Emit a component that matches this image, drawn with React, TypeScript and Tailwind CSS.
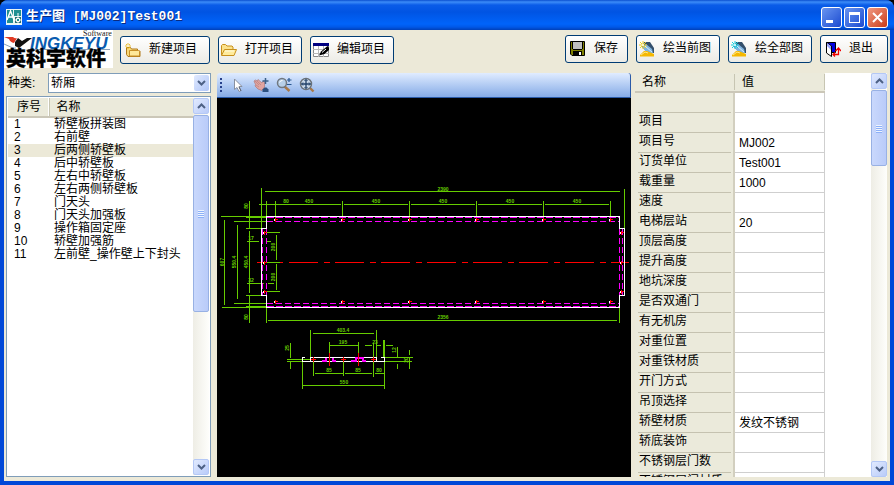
import type { ReactNode } from "react";
import clsx from "clsx";

const PARTS = [
  "轿壁板拼装图",
  "右前壁",
  "后两侧轿壁板",
  "后中轿壁板",
  "左右中轿壁板",
  "左右两侧轿壁板",
  "门天头",
  "门天头加强板",
  "操作箱固定座",
  "轿壁加强筋",
  "左前壁_操作壁上下封头",
];

const SELECTED_PART = 2;

const PROPERTIES = [
  { name: "", value: "" },
  { name: "项目", value: "" },
  { name: "项目号", value: "MJ002" },
  { name: "订货单位", value: "Test001" },
  { name: "载重量", value: "1000" },
  { name: "速度", value: "" },
  { name: "电梯层站", value: "20" },
  { name: "顶层高度", value: "" },
  { name: "提升高度", value: "" },
  { name: "地坑深度", value: "" },
  { name: "是否双通门", value: "" },
  { name: "有无机房", value: "" },
  { name: "对重位置", value: "" },
  { name: "对重铁材质", value: "" },
  { name: "开门方式", value: "" },
  { name: "吊顶选择", value: "" },
  { name: "轿壁材质", value: "发纹不锈钢" },
  { name: "轿底装饰", value: "" },
  { name: "不锈钢层门数", value: "" },
  { name: "不锈钢层门材质", value: "" },
];

// Hole positions along the long edges of the panel
const HOLES_X = [58.5, 125.5, 192.5, 259.5, 326.5, 393.5];
const HOLES_Y = [134.5, 164.5, 193.5];

/* ---------- icons ---------- */

const IconNew = () => (
  <svg viewBox="0 0 16 16" className="size-4 shrink-0">
    <path d="M1.5 5.5h4l1 1.5h6v2h2.5v5.5h-12l-1.5-2z" fill="#f8d878" stroke="#b07818" />
    <path d="M4.5 8.5h9l1 1v4.5h-10z" fill="#ffe99a" stroke="#c89028" />
    <path d="M3 1v6M0 4h6M1 2l4 4M5 2L1 6" stroke="#e8b820" strokeWidth=".9" />
    <path d="M3 3v2M2 4h2" stroke="#fff" />
  </svg>
);

const IconOpen = () => (
  <svg viewBox="0 0 16 16" className="size-4 shrink-0">
    <path d="M.5 13V3.5l1-1h3l1.500 1.500h5l1 1V7" fill="#fbe28c" stroke="#c8901c" />
    <path d="M.5 13.500L3.500 7.500h12l-2.500 6z" fill="#ffeb9c" stroke="#c8901c" />
    <path d="M4 9h9" stroke="#fffbe0" />
  </svg>
);

const IconEdit = () => (
  <svg viewBox="0 0 16 16" className="size-4 shrink-0">
    <path d="M.5 1.500h15v13H.5z" fill="#fff" stroke="#888" />
    <path d="M0 1h16v3H0z" fill="#000080" />
    <path d="M0 7.500h16M0 11.500h16M5.500 4v11M10.500 4v11" stroke="#b8b8b8" />
    <path d="M6 13.500l2-4L14.500 4l1.500 1.500V8l-4.500 4z" fill="#000" />
    <path d="M9 10.500l4-3.500" stroke="#fff" />
  </svg>
);

const IconSave = () => (
  <svg viewBox="0 0 16 16" className="size-4 shrink-0">
    <path d="M.5.5h14v14H2l-1.500-1.500z" fill="#808000" stroke="#000" />
    <path d="M3 1h9v7H3z" fill="#c0c0c0" />
    <path d="M3 8.500h9M2.500 1v7M12.500 1v7" stroke="#000" />
    <path d="M3 10h9v5H3z" fill="#000" />
    <path d="M9 11h2v3H9z" fill="#fff" />
  </svg>
);

const IconDraw = ({ star }: { star: string }) => (
  <svg viewBox="0 0 16 16" className="size-4 shrink-0">
    <path d="M5 1h6l4 6v5H9L3 6z" fill="#34506c" />
    <path d="M3 6l4-3 6 5 1 4H8z" fill="#7fb4e0" />
    <path d="M6 5l7 6" stroke="#d8ecfa" />
    <path d="M1 15.500V14l4-4h3l7 3v2.500z" fill="#f5b800" />
    <path d="M2 14l4-3 3 1" fill="none" stroke="#ffe68a" />
    <path d="M4 0v8M0 4h8M1 1l6 6M7 1L1 7" stroke={star} />
    <path d="M4 3v2M3 4h2" stroke="#fff" />
  </svg>
);

const IconExit = () => (
  <svg viewBox="0 0 16 16" className="size-4 shrink-0">
    <path d="M1.500 1.500h9v10h-9z" fill="#0000e0" stroke="#000" />
    <path d="M1.500 1.500L6.500 5v10.500l-5-3.500z" fill="#fff" stroke="#000" />
    <path d="M2 2l4 3.500V9L2 5z" fill="#9aa4ff" />
    <path d="M8 13.500h5.500V8M10.500 10l3-3 2.500 3M10 11.500l-2 2 2 2" fill="none" stroke="#f00000" strokeWidth="1.300" />
  </svg>
);

const IconPointer = () => (
  <svg viewBox="0 0 16 16" className="size-4">
    <path d="M4.500 2v10.500l2.500-2 2 4 2-1-2-4h3z" fill="#fff" stroke="#8890a0" />
    <path d="M9 10l2 4" stroke="#596070" />
  </svg>
);

const IconPan = () => (
  <svg viewBox="0 0 16 16" className="size-4">
    <path d="M1 4l1.500-1L4 4l1-1.500L9 6l1-2 1.500 1v5L9 13.500l-4-1.500-3-3 .5-1.500z" fill="#e0a4a0" stroke="#b07878" strokeWidth=".7" />
    <path d="M2 4l4 4M4 4l4 4M3 8l3 2" stroke="#b88080" strokeWidth=".7" />
    <path d="M12.500 1v6M9.500 4h6" stroke="#3c6088" strokeWidth="1.500" />
    <path d="M9.500 15v-2.500L11.500 10.500h2l2 2V15z" fill="#2c5080" />
  </svg>
);

const IconZoom = () => (
  <svg viewBox="0 0 16 16" className="size-4">
    <path d="M8 9l5.500 5" stroke="#a87848" strokeWidth="2.400" />
    <circle cx="6" cy="6" r="4.500" fill="#b8d0e8" stroke="#707880" strokeWidth="1.500" />
    <path d="M3.500 5.500a3 3 0 013-2" stroke="#fff" fill="none" />
    <path d="M13 1v4M11 3h4.500M11 7.500h4.500" stroke="#285890" strokeWidth="1.200" />
  </svg>
);

const IconExtents = () => (
  <svg viewBox="0 0 16 16" className="size-4">
    <path d="M10 10l4.500 4.500" stroke="#a87848" strokeWidth="2.400" />
    <circle cx="7" cy="7" r="5.500" fill="#c8d8e8" stroke="#687078" strokeWidth="1.400" />
    <path d="M7 2.500v9M2.500 7h9" stroke="#204068" strokeWidth="1.300" />
    <path d="M5.500 4L7 2.500 8.500 4M5.500 10L7 11.500 8.500 10M4 5.500L2.500 7 4 8.500M10 5.500L11.500 7 10 8.500" fill="none" stroke="#204068" />
  </svg>
);

const IconApp = () => (
  <svg viewBox="0 0 16 16" className="size-4 shrink-0">
    <path d="M0 0h16v16H0z" fill="#e8f4f4" />
    <path d="M1 1h6v13H1zM8 1h7v6H8z" fill="#1f8f92" />
    <path d="M1 11L4.500 2 8 11M2.500 8h4" fill="none" stroke="#fff" strokeWidth="1.400" />
    <path d="M9 8h6v6H9z" fill="#2a7074" />
    <path d="M12 4v12M7 11h9" stroke="#fff" />
    <path d="M10.500 9.500h3v3h-3z" fill="#1f8f92" stroke="#fff" />
  </svg>
);

const Chevron = ({ up = false }: { up?: boolean }) => (
  <svg viewBox="0 0 9 6" className={clsx("h-1.5 w-[9px]", up && "rotate-180")}>
    <path d="M1 1l3.500 3.500L8 1" fill="none" stroke="#4d6185" strokeWidth="2" />
  </svg>
);

/* ---------- controls ---------- */

interface PushButtonProps {
  icon: ReactNode;
  className: string;
  children: ReactNode;
}

const PushButton = ({ icon, className, children }: PushButtonProps) => (
  <button
    className={clsx(
      "flex h-7 items-center gap-2 rounded-[3px] border border-[#003c74] bg-gradient-to-b from-white to-[#ecebe5] leading-4 whitespace-nowrap",
      className,
    )}
  >
    {icon}
    <span className="pb-0.5">{children}</span>
  </button>
);

const ScrollButton = ({ up = false }: { up?: boolean }) => (
  <button
    aria-label={up ? "向上" : "向下"}
    className="flex h-4 w-full shrink-0 items-center justify-center rounded-[2px] border border-[#b4c8f6] bg-gradient-to-br from-[#e1eafe] to-[#b9cbf9]"
  >
    <Chevron up={up} />
  </button>
);

const ScrollBar = ({ thumb }: { thumb: string }) => (
  <div className="flex w-4 shrink-0 flex-col bg-gradient-to-r from-[#eeede5] to-[#fefefb]">
    <ScrollButton up />
    <div className="min-h-0 flex-1 pt-px">
      <div
        className={clsx(
          "flex flex-col items-center justify-center gap-px rounded-[2px] border border-[#98b1e4] bg-gradient-to-r from-[#c9d8fc] to-[#b9cbf9]",
          thumb,
        )}
      >
        {[0, 1, 2, 3].map((i) => (
          <span key={i} className="h-px w-1.5 bg-[#eef4fe] shadow-[0_1px_0_#8cb0f8]" />
        ))}
      </div>
    </div>
    <ScrollButton />
  </div>
);

const Logo = () => (
  <svg viewBox="0 0 109 38" className="h-[38px] w-[109px] shrink-0 overflow-visible bg-white">
    <text x="79" y="6" fontFamily="Liberation Serif, serif" fontSize="8" fill="#222">
      Software
    </text>
    <path d="M11 12l3-4 4 3 5-3h5L15 18l-4-2z" fill="#111" />
    <path d="M0 7h9q2 2 4 1l-3 5q-4-1-5-4z" fill="#e03a24" />
    <path d="M0 14l9 4h3M24 19.500h82" fill="none" stroke="#8aa0b8" />
    <text x="26" y="19" fontFamily="Liberation Sans, sans-serif" fontSize="17" fontWeight="bold" fontStyle="italic" fill="#0a5cb0">
      INGKEYU
    </text>
    <text x="2" y="36" fontFamily="Noto Sans CJK SC, sans-serif" fontSize="20" fontWeight="900" fill="#000" stroke="#000" strokeWidth=".3">
      英科宇软件
    </text>
  </svg>
);

/* ---------- drawing ---------- */

interface DimProps {
  x: number;
  y: number;
  vertical?: boolean;
  children: ReactNode;
}

const Dim = ({ x, y, vertical = false, children }: DimProps) => (
  <text
    x={x}
    y={y}
    textAnchor="middle"
    transform={vertical ? `rotate(-90 ${x} ${y})` : undefined}
    fontFamily="Liberation Sans, sans-serif"
    fontSize="5"
    fontWeight="bold"
    fill="#66cc00"
  >
    {children}
  </text>
);

const Hole = ({ x, y }: { x: number; y: number }) => (
  <g>
    <path d={`M${x - 2} ${y}h4M${x} ${y - 2}v4`} stroke="#f00" />
    <path d={`M${x - 1} ${y - 1}v2`} stroke="#fff" />
  </g>
);

const Drawing = () => (
  <svg viewBox="0 0 413 379" className="h-[379px] w-[413px] shrink-0" fill="none" shapeRendering="crispEdges">
    {/* panel dimensions */}
    <g stroke="#66cc00">
      <path d="M48 93.500H403M44.500 90V131M407.500 91V131" />
      <path d="M42 106.500H124M127 106.500H191M194 106.500H258M261 106.500H325M328 106.500H392" />
      <path d="M49.500 103V118M49.500 209V225M402.500 209V225M51 222.500H400" />
      <path d="M4 118.500H49M5 209.500H49M7.500 122V207M20.500 127V201M17 123.500H49M17 205.500H49" />
      <path d="M32.500 103V130M32.500 133V195M32.500 197V225M29 119.500H49M29 130.500H44M29 197.500H44M29 208.500H49" />
      <path d="M30 143.500H42M50 143.500H54M30 185.500H47M51 185.500H57" />
      <path d="M46 134.500H63M46 164.500H63M46 193.500H63M59.500 137V162M59.500 166V192" />
      {HOLES_X.map((x) => (
        <path key={x} d={`M${x} 103V121`} />
      ))}
    </g>
    {/* hidden edges and centre line */}
    <g stroke="#f0f">
      <path d="M50 119.500H402M50 208.500H402" strokeDasharray="7 2" />
      <path d="M50 123.500H402M50 205.500H402" strokeDasharray="6 3" />
      <path d="M45.500 131V197M49.500 131V197M402.500 131V197M405.500 131V197" strokeDasharray="6 3" />
    </g>
    <path d="M40 164.500h7M63 164.500h3" stroke="#f00" />
    <path d="M72 164.500H412" stroke="#f00" strokeDasharray="29 6 6 5" />
    <path d="M49.500 130.500V118.500H402.500V130.500H407.500V197.500H402.500V209.500H49.500V197.500H44.500V130.500H49.500" stroke="#fff" />
    {HOLES_X.map((x) => (
      <g key={x}>
        <Hole x={x} y={121.5} />
        <Hole x={x} y={203.5} />
      </g>
    ))}
    {HOLES_Y.map((y) => (
      <g key={y}>
        <Hole x={47.5} y={y} />
        <Hole x={404.5} y={y} />
      </g>
    ))}
    <Dim x={226} y={93}>2390</Dim>
    <Dim x={69} y={105}>80</Dim>
    <Dim x={92} y={105}>450</Dim>
    <Dim x={159} y={105}>450</Dim>
    <Dim x={226} y={105}>450</Dim>
    <Dim x={293} y={105}>450</Dim>
    <Dim x={360} y={105}>450</Dim>
    <Dim x={226} y={221}>2356</Dim>
    <Dim x={7} y={164} vertical>607</Dim>
    <Dim x={19} y={164} vertical>550.4</Dim>
    <Dim x={31} y={164} vertical>450.4</Dim>
    <Dim x={31} y={108} vertical>80</Dim>
    <Dim x={31} y={219} vertical>80</Dim>
    <Dim x={34} y={142}>17</Dim>
    <Dim x={34} y={184}>32</Dim>
    <Dim x={58} y={149} vertical>200</Dim>
    <Dim x={58} y={179} vertical>200</Dim>

    {/* section view */}
    <g stroke="#66cc00">
      <path d="M96 235.500H157M93.500 232V263M159.500 232V263" />
      <path d="M112 247.500H141M112.500 244V255M141.500 244V255" />
      <path d="M148 247.500H155M160 247.500H164M169 247.500H176M156.500 245V279" />
      <path d="M167 242V259" strokeWidth="2" />
      <path d="M168 259.500H196M168 263.500H195M180.500 249V259M180.500 266V271M192.500 252V257M192.500 260V271" />
      <path d="M73.500 245V260M73.500 263V271M70 261.500H94M70 263.500H85" />
      <path d="M98 275.500H126M128 275.500H155M158 275.500H167M96.500 264V278M126.500 264V278" />
      <path d="M85 287.500H168M85.500 264V291M167.500 264V291" />
    </g>
    <path d="M88 259.500H85.500V263.500H167.500V259.500H164M93.500 263V259.500H159.500V263" stroke="#fff" />
    <path d="M105 263H108.500V259.500M115.500 259.500V263H119M134 263H138.500V259.500H145.500V263H149" stroke="#f0f" strokeWidth="2" />
    <path d="M112.500 255V268M141.500 255V268M94 261.500h5M96.500 259v5M124 261.500h5M126.500 259v5M154 261.500h5M156.500 259v5" stroke="#f00" />
    <Dim x={126} y={234}>403.4</Dim>
    <Dim x={126} y={246}>195</Dim>
    <Dim x={158} y={246}>23</Dim>
    <Dim x={72} y={250} vertical>25</Dim>
    <Dim x={179} y={252} vertical>12</Dim>
    <Dim x={191} y={262} vertical>20</Dim>
    <Dim x={112} y={274}>85</Dim>
    <Dim x={141} y={274}>85</Dim>
    <Dim x={162} y={274}>80</Dim>
    <Dim x={127} y={286}>550</Dim>
  </svg>
);

/* ---------- window sections ---------- */

const TitleBar = () => (
  <header className="flex h-[30px] shrink-0 items-center gap-1 bg-[linear-gradient(180deg,#0a4fd0_0,#3c8cf8_2px,#0a5ce8_5px,#0054e3_12px,#0064fa_24px,#0058e8_27px,#0040b8_30px)] px-1.5 pt-1">
    <IconApp />
    <h1 className="flex-1 font-['Liberation_Mono','Noto_Sans_CJK_SC',monospace] text-[13px] leading-5 font-bold whitespace-pre text-white [text-shadow:1px_1px_#0a2a80]">
      生产图 [MJ002]Test001
    </h1>
    <div className="flex gap-0.5">
      <button aria-label="最小化" className="flex size-[21px] items-end rounded-[3px] border border-white bg-gradient-to-br from-[#6a94f0] to-[#1c48d0] p-1">
        <span className="h-[3px] w-[7px] bg-white" />
      </button>
      <button aria-label="最大化" className="flex size-[21px] items-center justify-center rounded-[3px] border border-white bg-gradient-to-br from-[#6a94f0] to-[#1c48d0]">
        <span className="size-[11px] border border-t-[3px] border-white" />
      </button>
      <button aria-label="关闭" className="flex size-[21px] items-center justify-center rounded-[3px] border border-white bg-gradient-to-br from-[#f09880] to-[#c83810]">
        <svg viewBox="0 0 11 11" className="size-[11px]">
          <path d="M1 1l9 9M10 1l-9 9" stroke="#fff" strokeWidth="2" />
        </svg>
      </button>
    </div>
  </header>
);

const PartsPanel = () => (
  <aside className="flex w-[213px] shrink-0 flex-col gap-[3px] pr-1.5 pl-0.5">
    <div className="flex h-5 shrink-0 items-center">
      <label htmlFor="kind" className="w-[42px] pl-0.5">
        种类:
      </label>
      <div className="relative h-5 flex-1">
        <select id="kind" className="h-5 w-full appearance-none border border-[#7f9db9] bg-white pl-0.5 leading-4">
          <option>轿厢</option>
        </select>
        <span className="pointer-events-none absolute top-0.5 right-0.5 flex h-4 w-[15px] items-center justify-center rounded-[2px] bg-gradient-to-br from-[#e1eafe] to-[#b0c6f8]">
          <Chevron />
        </span>
      </div>
    </div>
    <div className="flex min-h-0 flex-1 border border-[#7f9db9] bg-white p-px">
      <div className="flex-1">
        <table className="w-full table-fixed border-collapse text-left">
          <thead>
            <tr className="h-[19px] border-b-2 border-[#cbc7b8] bg-[#ebeadb] leading-4">
              <th className="w-10 pl-[9px] font-normal">序号</th>
              <th className="border-l border-white pl-2 font-normal shadow-[inset_1px_0_#c7c5b2]">名称</th>
            </tr>
          </thead>
          <tbody>
            {PARTS.map((part, index) => (
              <tr key={part} className={clsx("h-[13px] leading-[13px]", index === SELECTED_PART && "bg-[#ece9d8]")}>
                <td className="pl-1.5">{index + 1}</td>
                <td className="pl-1.5 whitespace-nowrap">{part}</td>
              </tr>
            ))}
          </tbody>
        </table>
      </div>
      <ScrollBar thumb="h-[197px]" />
    </div>
  </aside>
);

const Viewer = () => (
  <main className="flex min-w-0 flex-1 flex-col">
    <div className="flex h-[25px] shrink-0 items-center gap-[7px] rounded-tl-[3px] rounded-tr-[3px] border-r border-b border-[#2a5aa8] bg-gradient-to-b from-[#e0ecff] to-[#86abe6] pl-[3px]">
      <span className="mr-px flex flex-col gap-0.5">
        {[0, 1, 2, 3].map((i) => (
          <i key={i} className="size-0.5 bg-[#27418c]" />
        ))}
      </span>
      <button aria-label="选择" className="size-4"><IconPointer /></button>
      <button aria-label="平移" className="size-4"><IconPan /></button>
      <button aria-label="缩放" className="size-4"><IconZoom /></button>
      <button aria-label="全部显示" className="size-4"><IconExtents /></button>
    </div>
    <div className="flex min-h-0 flex-1 overflow-hidden bg-black">
      <Drawing />
    </div>
  </main>
);

const PropertyPanel = () => (
  <section className="flex w-[259px] shrink-0 pr-[3px] pl-1">
    <div className="min-w-0 flex-1 overflow-hidden bg-white">
      <table className="w-[190px] table-fixed border-separate border-spacing-0 text-left">
        <thead>
          <tr className="bg-[#ebeadb] leading-4">
            <th className="h-5 w-[100px] border-b-2 border-[#cbc7b8] pl-[7px] font-normal">
              <span className="block border-r border-[#c7c5b2]">名称</span>
            </th>
            <th className="border-b-2 border-[#cbc7b8] pl-[7px] font-normal">
              <span className="block border-r border-[#c7c5b2]">值</span>
            </th>
          </tr>
        </thead>
        <tbody>
          {PROPERTIES.map(({ name, value }, index) => (
            <tr key={index}>
              <th scope="row" className="h-5 border-r-2 border-[#d2cfbf] bg-[#ebeadb] pr-0.5 pl-[3px] font-normal">
                <span className="block h-[19px] border-b border-[#c5c2b0] pl-px leading-[14px] whitespace-nowrap shadow-[0_1px_#fff]">
                  {name}
                </span>
              </th>
              <td className="border-r border-b border-[#cfcfcf] bg-white pl-1 leading-4">{value}</td>
            </tr>
          ))}
        </tbody>
      </table>
    </div>
    <ScrollBar thumb="h-[76px]" />
  </section>
);

export default function App() {
  return (
    <div className="h-screen bg-black font-['Liberation_Sans','Noto_Sans_CJK_SC',sans-serif] text-xs text-black">
      <div className="flex h-full flex-col overflow-hidden rounded-t-lg bg-[#0048d8]">
        <TitleBar />
        <div className="mx-1 mb-1 flex min-h-0 flex-1 flex-col bg-[#ece9d8] pb-1">
          <div className="flex h-[43px] shrink-0 items-start">
            <Logo />
            <div className="flex flex-1 gap-2 pt-1.5 pl-[7px]">
              <PushButton icon={<IconNew />} className="w-[90px] pl-1">新建项目</PushButton>
              <PushButton icon={<IconOpen />} className="w-[84px] pl-0.5">打开项目</PushButton>
              <PushButton icon={<IconEdit />} className="w-[84px] pl-0.5">编辑项目</PushButton>
            </div>
            <div className="flex gap-2 pt-[5px] pr-0.5">
              <PushButton icon={<IconSave />} className="w-[63px] pl-1">保存</PushButton>
              <PushButton icon={<IconDraw star="#f0d020" />} className="w-[84px] pl-0.5">绘当前图</PushButton>
              <PushButton icon={<IconDraw star="#10d0e0" />} className="w-[84px] pl-0.5">绘全部图</PushButton>
              <PushButton icon={<IconExit />} className="w-[68px] pl-1">退出</PushButton>
            </div>
          </div>
          <div className="flex min-h-0 flex-1">
            <PartsPanel />
            <Viewer />
            <PropertyPanel />
          </div>
        </div>
      </div>
    </div>
  );
}
